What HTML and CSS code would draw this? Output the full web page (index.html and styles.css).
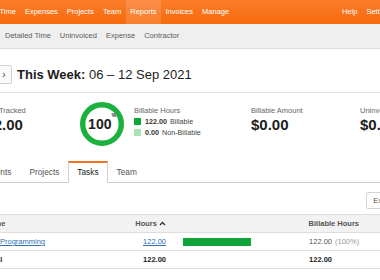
FILE: index.html
```html
<!DOCTYPE html>
<html lang="en">
<head>
    <meta charset="UTF-8">
    <meta name="viewport" content="width=device-width, initial-scale=1.0">
    <title>Reports - Tasks</title>
    <link rel="stylesheet" href="styles.css">
</head>
<body>
    <header class="topnav">
        <nav class="topnav-main">
            <a href="#">Time</a>
            <a href="#">Expenses</a>
            <a href="#">Projects</a>
            <a href="#">Team</a>
            <a href="#" class="active">Reports</a>
            <a href="#">Invoices</a>
            <a href="#">Manage</a>
        </nav>
        <nav class="topnav-right">
            <a href="#">Help</a>
            <a href="#">Settings</a>
        </nav>
    </header>

    <nav class="subnav">
        <a href="#">Detailed Time</a>
        <a href="#">Uninvoiced</a>
        <a href="#">Expense</a>
        <a href="#">Contractor</a>
    </nav>

    <main class="content">
        <div class="title-row">
            <div class="pager">
                <button class="pager-button">&lsaquo;</button>
                <button class="pager-button">&rsaquo;</button>
            </div>
            <h1 class="title"><strong>This Week:</strong> 06 &ndash; 12 Sep 2021</h1>
        </div>

        <section class="stats">
            <div class="stat stat-tracked">
                <div class="stat-label">Hours Tracked</div>
                <div class="stat-value">122.00</div>
            </div>
            <div class="stat stat-billable">
                <div class="donut">
                    <svg width="44" height="44" viewBox="0 0 44 44">
                        <circle cx="22" cy="22" r="19.3" fill="none" stroke="#1cb03c" stroke-width="5.4"/>
                    </svg>
                    <span class="donut-text">100<sup>%</sup></span>
                </div>
                <div class="legend">
                    <div class="stat-label">Billable Hours</div>
                    <div class="legend-item"><span class="swatch swatch-billable"></span><b>122.00</b> Billable</div>
                    <div class="legend-item"><span class="swatch swatch-non"></span><b>0.00</b> Non-Billable</div>
                </div>
            </div>
            <div class="stat stat-amount">
                <div class="stat-label">Billable Amount</div>
                <div class="stat-value">$0.00</div>
            </div>
            <div class="stat">
                <div class="stat-label">Uninvoiced Amount</div>
                <div class="stat-value">$0.00</div>
            </div>
        </section>

        <ul class="tabs">
            <li><a href="#">Clients</a></li>
            <li><a href="#">Projects</a></li>
            <li class="active"><a href="#">Tasks</a></li>
            <li><a href="#">Team</a></li>
        </ul>

        <div class="toolbar">
            <button class="export-button">Export</button>
        </div>

        <table class="report">
            <colgroup>
                <col class="col-name">
                <col class="col-hours">
                <col class="col-bar">
                <col class="col-billable">
                <col class="col-amount">
            </colgroup>
            <thead>
                <tr>
                    <th class="cell-name">Name</th>
                    <th class="cell-num">Hours <svg class="caret" width="7" height="5" viewBox="0 0 7 5"><path d="M1 4 L3.5 1.5 L6 4" fill="none" stroke="#333" stroke-width="1.3"/></svg></th>
                    <th></th>
                    <th class="cell-num">Billable Hours<span class="pct"></span></th>
                    <th class="cell-num">Billable Amount</th>
                </tr>
            </thead>
            <tbody>
                <tr>
                    <td class="cell-name task-name"><a href="#">Programming</a></td>
                    <td class="cell-num"><a href="#">122.00</a></td>
                    <td class="cell-bar"><div class="bar"><div class="bar-fill" style="width: 100%"></div></div></td>
                    <td class="cell-num">122.00<span class="pct">(100%)</span></td>
                    <td class="cell-num">$0.00</td>
                </tr>
                <tr class="total">
                    <td class="cell-name">Total</td>
                    <td class="cell-num">122.00</td>
                    <td></td>
                    <td class="cell-num">122.00<span class="pct"></span></td>
                    <td class="cell-num">$0.00</td>
                </tr>
            </tbody>
        </table>
    </main>
</body>
</html>
```

FILE: styles.css
```css
html, body {
    margin: 0;
    overflow: hidden;
}
body {
    font-family: "Liberation Sans", Arial, sans-serif;
    color: #1d1d1d;
    background: #fff;
    width: 380px;
}
a {
    text-decoration: none;
    color: inherit;
}

/* top bar */
.topnav {
    display: flex;
    justify-content: space-between;
    height: 24px;
    background: linear-gradient(#fb7c2a, #f66a0c);
    font-size: 7.5px;
    white-space: nowrap;
}
.topnav nav {
    display: flex;
}
.topnav-main {
    margin-left: -5px;
}
.topnav a {
    color: #fff;
    line-height: 24px;
    padding: 0 4.5px;
}
.topnav a.active {
    background: rgba(255, 255, 255, 0.14);
}
.topnav-right {
    margin-right: -18px;
}

.subnav {
    display: flex;
    gap: 9px;
    height: 24px;
    padding-left: 5px;
    background: #efefef;
    border-bottom: 1px solid #dcdcdc;
    font-size: 7.5px;
    line-height: 24px;
    white-space: nowrap;
}
.subnav a {
    color: #5c5c5c;
}

/* page */
.content {
    margin-left: -23px;
    width: 425px;
}
.title-row {
    display: flex;
    align-items: center;
    gap: 5px;
    padding: 16px 0 8px;
    border-bottom: 1px solid #e3e3e3;
}
.pager {
    display: flex;
    gap: 3px;
}
.pager-button {
    width: 16px;
    height: 19px;
    padding: 0;
    border: 1px solid #cfcfcf;
    border-radius: 2px;
    background: #fafafa;
    color: #444;
    font-family: inherit;
    font-size: 10px;
    line-height: 17px;
}
.title {
    margin: 0;
    font-size: 13px;
    font-weight: normal;
    line-height: 19px;
    white-space: nowrap;
}

.stats {
    display: flex;
    align-items: flex-start;
    padding-top: 13px;
    white-space: nowrap;
}
.stat {
    flex: none;
}
.stat-label {
    font-size: 7.5px;
    line-height: 10px;
    color: #666;
}
.stat-value {
    font-size: 15px;
    font-weight: bold;
    line-height: 18px;
}
.stat-tracked {
    width: 103px;
}
.stat-billable {
    display: flex;
    gap: 10px;
    width: 171px;
}
.stat-amount {
    width: 109px;
}
.donut {
    position: relative;
    width: 44px;
    height: 44px;
    margin-top: -4px;
}
.donut svg {
    display: block;
}
.donut-text {
    position: absolute;
    top: 0;
    left: 0;
    right: 0;
    text-align: center;
    font-size: 14px;
    font-weight: bold;
    line-height: 44px;
}
.donut-text sup {
    font-size: 5px;
    position: relative;
    top: -2px;
    vertical-align: top;
    line-height: 30px;
}
.legend-item {
    display: flex;
    align-items: center;
    gap: 3px;
    font-size: 7.2px;
    line-height: 11px;
    color: #444;
}
.legend-item:first-of-type {
    margin-top: 1px;
}
.legend-item b {
    color: #333;
}
.swatch {
    width: 7px;
    height: 7px;
    margin-right: 1px;
}
.swatch-billable {
    background: #10a537;
}
.swatch-non {
    background: #a9e2b5;
}

/* tabs */
.tabs {
    display: flex;
    margin: 15px 0 0;
    padding: 0;
    list-style: none;
    border-bottom: 1px solid #cfcfcf;
    font-size: 8.3px;
}
.tabs li {
    margin-bottom: -1px;
    border-top: 2px solid transparent;
    border-left: 1px solid transparent;
    border-right: 1px solid transparent;
}
.tabs li a {
    display: block;
    padding: 0 8px;
    line-height: 19px;
    color: #555;
}
.tabs li.active {
    border-top-color: #f47321;
    border-left-color: #cfcfcf;
    border-right-color: #cfcfcf;
    border-bottom: 1px solid #fff;
    background: #fff;
}
.tabs li.active a {
    color: #222;
}

.toolbar {
    display: flex;
    justify-content: flex-end;
    padding: 9px 0 5px;
}
.export-button {
    height: 17px;
    padding: 0 6px;
    border: 1px solid #d4d4d4;
    border-radius: 2px;
    background: #fff;
    color: #555;
    font-family: inherit;
    font-size: 7.5px;
}

/* report table */
.report {
    width: 560px;
    table-layout: fixed;
    border-collapse: collapse;
    font-size: 7.5px;
    white-space: nowrap;
}
.col-name { width: 137px; }
.col-hours { width: 60px; }
.col-bar { width: 93px; }
.col-billable { width: 100px; }
.col-amount { width: 170px; }
.report th,
.report td {
    height: 17px;
    padding: 0 8px;
    border-bottom: 1px solid #dedede;
    text-align: left;
}
.report th {
    border-top: 1px solid #dedede;
    background: #f2f2f2;
    color: #555;
    font-weight: bold;
}
.report .cell-name {
    padding-left: 8px;
}
.report .task-name {
    padding-left: 23px;
}
.report .cell-num {
    text-align: right;
}
.report td a {
    color: #2f6fae;
    text-decoration: underline;
}
.caret {
    vertical-align: 0;
}
.pct {
    display: inline-block;
    width: 24px;
    margin-left: 3px;
    text-align: left;
    color: #999;
}
.report th .pct {
    width: 0;
    margin-left: 0;
}
.cell-bar {
    padding-left: 9px !important;
}
.bar {
    width: 68px;
    height: 8px;
}
.bar-fill {
    height: 100%;
    background: #0ea43a;
}
.report td {
    color: #555;
}
.total td {
    font-weight: bold;
    color: #222;
}
```
